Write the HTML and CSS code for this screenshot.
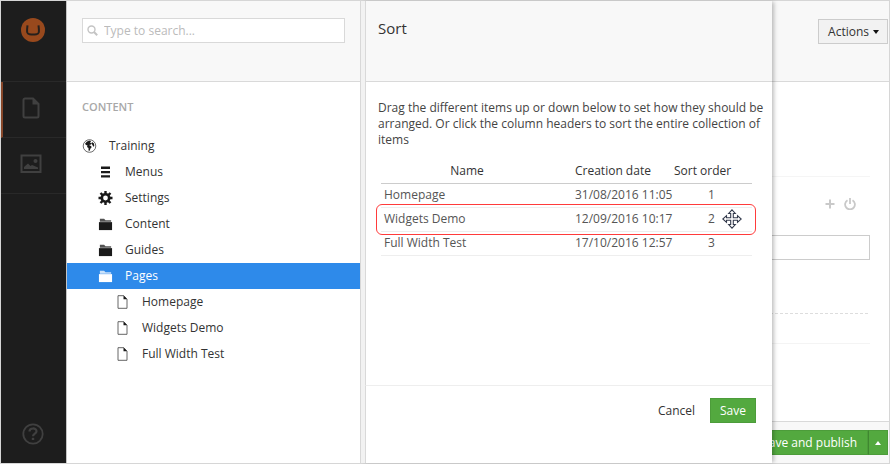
FILE: index.html
```html
<!DOCTYPE html>
<html lang="en">
<head>
<meta charset="utf-8">
<meta name="viewport" content="width=device-width, initial-scale=1">
<title>Sort</title>
<link rel="stylesheet" href="styles.css">
</head>
<body>
<svg class="sprite" aria-hidden="true">
  <symbol id="folder" viewBox="0 0 16 14"><path d="M2 3V1.500h4.500L8 3h6v1.500H2z" opacity=".75"/><path d="M1 5h14v8.500H1z"/></symbol>
  <symbol id="doc" viewBox="0 0 12 14"><path d="M1.500.7h5.800l3.200 3.500v9.100h-9z" fill="none" stroke="#555" stroke-width=".9"/><path d="M7 .5v3.700h3.700z"/></symbol>
</svg>
<div class="app">
  <nav class="rail" aria-label="Sections">
    <a class="rail-logo" href="#" aria-label="Umbraco">
      <svg width="24" height="24" viewBox="0 0 24 24"><circle cx="12" cy="12" r="12" fill="#98491d"/><path d="M6.500 7.300C5.600 14.500 6 16 8.500 16.300q3.500.4 7 0C18 16 18.400 14.500 17.500 7.300" fill="none" stroke="#27201c" stroke-width="2"/></svg>
    </a>
    <a class="rail-item rail-item-active" href="#" aria-label="Content">
      <svg width="18" height="22" viewBox="0 0 18 22"><path d="M3 1.500h8l5.500 5.500v12a1.500 1.500 0 0 1-1.500 1.500H3A1.500 1.500 0 0 1 1.500 19V3A1.500 1.500 0 0 1 3 1.500z" fill="none" stroke="currentColor" stroke-width="2"/><path d="M10.500 1v6.500H17z" fill="currentColor"/></svg>
    </a>
    <a class="rail-item" href="#" aria-label="Media">
      <svg width="22" height="20" viewBox="0 0 22 20"><path d="M1.500 1.500h19v16.500h-19z" fill="none" stroke="currentColor" stroke-width="2"/><path d="M4 15v-2l4-3.500 2.500 2.500 1.500-1 6 2.500V15z" fill="currentColor"/><circle cx="15.500" cy="7" r="2" fill="currentColor"/></svg>
    </a>
    <a class="rail-help" href="#" aria-label="Help">
      <svg width="22" height="22" viewBox="0 0 22 22" fill="none" stroke="currentColor"><circle cx="11" cy="11" r="9.700" stroke-width="1.800"/><path d="M7.500 8.500C7.500 4.500 14.500 4.500 14.500 8.300c0 2.400-3.500 2.300-3.500 5" stroke-width="2.200"/><path d="M11 14.800v2.200" stroke-width="2.400"/></svg>
    </a>
  </nav>

  <aside class="tree">
    <header class="bar tree-bar">
      <label class="search">
        <svg width="11" height="11" viewBox="0 0 11 11" fill="none" stroke="#c4c4c4"><circle cx="4.500" cy="4.500" r="3.500" stroke-width="1.400"/><path d="M7 7l3.200 3.200" stroke-width="2"/></svg>
        <input type="text" placeholder="Type to search..." aria-label="Search">
      </label>
    </header>
    <h2 class="tree-title">CONTENT</h2>
    <ul class="nodes">
      <li><a class="node" href="#"><svg class="icon" viewBox="0 0 14 14"><circle cx="7" cy="7" r="6.300" fill="#fff" stroke="#444" stroke-width=".8"/><path d="M2.500 4.800L4.500 2.500l3-1 1 1-1 1.200 1.500.5-.5 1.300L6.500 6l1.500.8 1.300 1.200L8 9.500l-1 2.500-1-.5V9L4.500 8 5 6.500 3.500 6zM9.500 3l2 1.500.3 2.500-1 .8-1-2-.8-1z"/></svg>Training</a></li>
      <li><a class="node level-2" href="#"><svg class="icon" viewBox="0 0 14 14"><path d="M2.500 1.500h9V4h-9zM2.500 6h9v2.200h-9zM2.500 10.300h9v2.200h-9z"/></svg>Menus</a></li>
      <li><a class="node level-2" href="#"><svg class="icon" viewBox="0 0 14 14"><circle cx="7" cy="7" r="3.700" fill="none" stroke="currentColor" stroke-width="2.600"/><path d="M7 0v3M7 11v3M0 7h3M11 7h3M2 2l2.200 2.200M9.800 9.800L12 12M12 2L9.800 4.200M4.200 9.800L2 12" stroke="currentColor" stroke-width="2.400"/></svg>Settings</a></li>
      <li><a class="node level-2" href="#"><svg class="icon"><use href="#folder"/></svg>Content</a></li>
      <li><a class="node level-2" href="#"><svg class="icon"><use href="#folder"/></svg>Guides</a></li>
      <li><a class="node level-2 node-selected" href="#" aria-current="page"><svg class="icon"><use href="#folder"/></svg>Pages</a></li>
      <li><a class="node level-3" href="#"><svg class="icon"><use href="#doc"/></svg>Homepage</a></li>
      <li><a class="node level-3" href="#"><svg class="icon"><use href="#doc"/></svg>Widgets Demo</a></li>
      <li><a class="node level-3" href="#"><svg class="icon"><use href="#doc"/></svg>Full Width Test</a></li>
    </ul>
  </aside>

  <main class="editor">
    <header class="bar editor-bar"><button class="actions" type="button">Actions<span class="caret-down"></span></button></header>
    <div class="editor-body">
      <div class="tools">
        <svg width="10" height="10" viewBox="0 0 10 10"><path d="M5 .5v9M.5 5h9" stroke="#c9c9c9" stroke-width="2"/></svg>
        <svg width="12" height="12" viewBox="0 0 12 12" fill="none" stroke="#c9c9c9" stroke-width="1.800"><path d="M3.500 2.200a4.900 4.900 0 1 0 5 0M6 0v6"/></svg>
      </div>
      <input class="field" type="text" aria-label="Item">
      <div class="dashes"></div>
    </div>
    <footer class="editor-foot">
      <button class="green publish" type="button">Save and publish</button>
      <button class="green more" type="button" aria-label="More publish options"><span class="caret-up"></span></button>
    </footer>

    <section class="dialog" aria-labelledby="dialog-title">
      <header class="bar dialog-bar"><h1 id="dialog-title">Sort</h1></header>
      <div class="dialog-body">
        <p>Drag the different items up or down below to set how they should be arranged. Or click the column headers to sort the entire collection of items</p>
        <table>
          <colgroup><col class="col-name"><col class="col-date"><col></colgroup>
          <thead><tr><th class="name-head">Name</th><th class="date">Creation date</th><th>Sort order</th></tr></thead>
          <tbody>
            <tr><td>Homepage</td><td class="date">31/08/2016 11:05</td><td class="order">1</td></tr>
            <tr class="dragging"><td>Widgets Demo</td><td class="date">12/09/2016 10:17</td><td class="order">2<span class="outline"></span><svg class="move" width="20" height="20" viewBox="0 0 20 20" fill="#fff" stroke="#343b4d" stroke-width="1.100"><path d="M10 .8l3.300 3.700h-2V8.700h4.200v-2L19.200 10l-3.700 3.300v-2h-4.200v4.200h2L10 19.200l-3.300-3.700h2v-4.200H4.500v2L.8 10l3.700-3.300v2h4.200V4.500h-2z"/></svg></td></tr>
            <tr><td>Full Width Test</td><td class="date">17/10/2016 12:57</td><td class="order">3</td></tr>
          </tbody>
        </table>
      </div>
      <footer class="dialog-foot">
        <button class="cancel" type="button">Cancel</button>
        <button class="green save" type="button">Save</button>
      </footer>
    </section>
  </main>
</div>
</body>
</html>
```
FILE: styles.css
```css
* { box-sizing: border-box; }

body {
  margin: 0;
  font: 12px/16px "Open Sans", "Noto Sans", sans-serif;
  color: #333;
}

button, input { font: inherit; color: inherit; margin: 0; }
a { color: inherit; text-decoration: none; }
svg { flex: none; }
.sprite { display: none; }

.app {
  display: grid;
  grid-template-columns: 66px 293px minmax(0, 1fr);
  min-height: 100vh;
  border: 1px solid #d6d6d6;
  background: #fff;
}

.bar {
  height: 81px;
  background: #f8f8f8;
  border-bottom: 1px solid #d9d9d9;
}

.rail {
  display: flex;
  flex-direction: column;
  background: #1d1d1d;
  border-right: 1px solid #c4c4c4;
  color: #404040;
}
.rail-logo {
  height: 81px;
  padding: 17px 20px;
  border-bottom: 1px solid #292929;
}
.rail-item {
  display: flex;
  align-items: center;
  justify-content: center;
  height: 56px;
  padding: 0 5px 4px 0;
  border-bottom: 1px solid #292929;
}
.rail-item-active { border-left: 2px solid #87472a; padding-right: 8px; }
.rail-help { height: 40px; margin-top: auto; padding-left: 21px; }

.tree-bar { padding: 17px 15px; }
.search {
  display: flex;
  align-items: center;
  gap: 6px;
  height: 25px;
  padding: 0 4px;
  background: #fff;
  border: 1px solid #d9d9d9;
}
.search input {
  flex: 1;
  min-width: 0;
  padding: 0;
  border: 0;
  outline: 0;
  background: none;
}
.search input::placeholder { color: #bbb; opacity: 1; }
.tree-title {
  margin: 17px 15px 18px;
  font-size: 11px;
  line-height: 16px;
  font-weight: 600;
  color: #a8a8a8;
}
.nodes { margin: 0; padding: 0; list-style: none; }
.node {
  display: flex;
  align-items: center;
  gap: 12px;
  height: 26px;
  padding-left: 15px;
}
.level-2 { padding-left: 31px; }
.level-3 { padding-left: 48px; }
.icon { width: 15px; height: 14px; fill: currentColor; color: #1a1a1a; }
.node-selected { background: #2e8aea; color: #fff; font-weight: 500; }
.node-selected .icon { color: #fff; }

.editor {
  position: relative;
  display: flex;
  flex-direction: column;
  border-left: 1px solid #d9d9d9;
}
.editor-bar {
  display: flex;
  justify-content: flex-end;
  padding: 18px 1px;
}
.actions {
  display: flex;
  align-items: center;
  gap: 4px;
  height: 25px;
  padding: 0 8px 0 9px;
  background: #f2f2f2;
  border: 1px solid #ccc;
}
.caret-down, .caret-up { border: 3px solid transparent; }
.caret-down { border-top: 4px solid #111; border-bottom: 0; }
.caret-up { border-bottom: 4px solid #fff; border-top: 0; }

.editor-body { flex: 1; padding: 94px 19px 0; }
.tools {
  display: flex;
  align-items: center;
  justify-content: flex-end;
  gap: 9px;
  height: 54px;
  padding-right: 14px;
  border-top: 1px solid #f5f5f5;
}
.field {
  display: block;
  width: 100%;
  height: 25px;
  margin-top: 5px;
  border: 1px solid #ccc;
}
.dashes {
  height: 84px;
  border-bottom: 1px solid #f4f4f4;
  background: repeating-linear-gradient(90deg, #ddd 0 3px, transparent 3px 5px) 0 53px / 100% 1px no-repeat;
}
.editor-foot {
  display: flex;
  justify-content: flex-end;
  padding: 8px 1px;
  border-top: 1px solid #d9d9d9;
  background: #f8f8f8;
}
.green {
  height: 25px;
  background: #53a93f;
  border: 1px solid #4c9c3a;
  color: #fff;
  font-weight: 500;
}
.publish { padding: 0 10px; }
.more { display: flex; align-items: center; padding: 0 6px; border-left: 1px solid #3f8730; }

.dialog {
  position: absolute;
  top: 0;
  bottom: 0;
  left: 0;
  width: 411px;
  display: flex;
  flex-direction: column;
  background: #fff;
  border-left: 4px solid #f2f2f2;
  box-shadow: 3px 0 4px -1px rgba(0, 0, 0, .25);
}
.dialog-bar {
  padding: 17px 12px;
  border-left: 1px solid #d9d9d9;
}
.dialog-bar h1 {
  margin: 0;
  font-size: 15px;
  line-height: 20px;
  font-weight: 400;
}
.dialog-body {
  flex: 1;
  padding: 18px 4px 0 12px;
  border-left: 1px solid #d9d9d9;
}
.dialog-body p { margin: 0 0 11px; color: #444; }
table {
  width: calc(100% - 19px);
  margin-left: 3px;
  table-layout: fixed;
  border-collapse: collapse;
}
.col-name { width: 172px; }
.col-date { width: 118px; }
th, td { height: 24px; padding: 0 3px; text-align: left; white-space: nowrap; }
th { font-weight: 500; border-bottom: 1px solid #ccc; }
td { color: #555; border-bottom: 1px solid #eee; }
.name-head { text-align: center; }
th.date, td.date { padding: 0 0 0 22px; }
td.order { text-align: center; }
.dragging { position: relative; }
.outline {
  position: absolute;
  inset: -3px -4px -4px -5px;
  border: 1px solid #ff3b3b;
  border-radius: 6px;
}
.move { position: absolute; right: 10px; top: 2px; }

.dialog-foot {
  display: flex;
  justify-content: flex-end;
  align-items: flex-start;
  gap: 15px;
  height: 78px;
  padding: 12px 16px;
  border-top: 1px solid #eee;
  border-left: 1px solid #d9d9d9;
}
.cancel { height: 25px; padding: 0; background: none; border: 0; }
.save { padding: 0 9px; }
```
